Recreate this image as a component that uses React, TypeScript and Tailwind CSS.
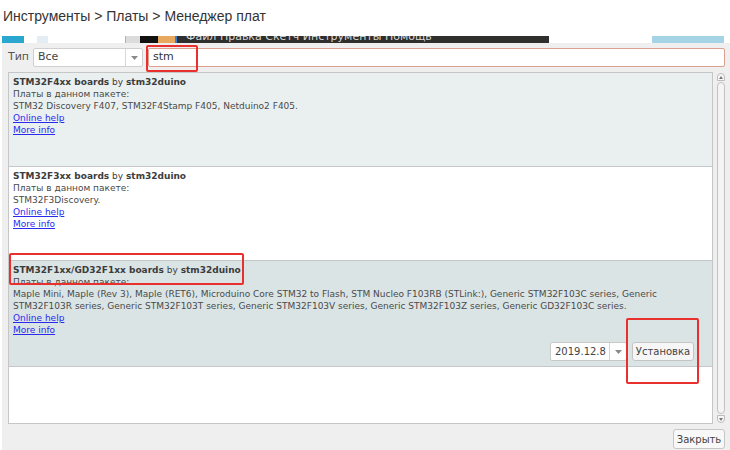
import React from 'react';

type Pkg = {
    name: string;
    boards: string;
    bg: string;
    height: string;
    installable?: boolean;
};

const packages: Pkg[] = [
    {
        name: 'STM32F4xx boards',
        boards: 'STM32 Discovery F407, STM32F4Stamp F405, Netduino2 F405.',
        bg: 'bg-[#eaf0f0]',
        height: 'h-[94px]',
    },
    {
        name: 'STM32F3xx boards',
        boards: 'STM32F3Discovery.',
        bg: 'bg-white',
        height: 'h-[94px]',
    },
    {
        name: 'STM32F1xx/GD32F1xx boards',
        boards:
            'Maple Mini, Maple (Rev 3), Maple (RET6), Microduino Core STM32 to Flash, STM Nucleo F103RB (STLink:), Generic STM32F103C series, Generic STM32F103R series, Generic STM32F103T series, Generic STM32F103V series, Generic STM32F103Z series, Generic GD32F103C series.',
        bg: 'bg-[#dbe4e5]',
        height: 'h-[106px]',
        installable: true,
    },
];

const ArrowDown = () => (
    <svg width="7" height="4" viewBox="0 0 7 4">
        <path d="M0 0 L7 0 L3.5 4 Z" fill="#8a8a8a" />
    </svg>
);

const PackageRow: React.FC<{ pkg: Pkg }> = ({ pkg }) => (
    <div className={`${pkg.height} ${pkg.bg} border-b border-[#c4c8c8] px-[4px] pt-[3px] flex flex-col`}>
        <div className="text-[9px] leading-[12px] text-[#3c3c3c]">
            <b>{pkg.name}</b> by <b>stm32duino</b>
        </div>
        <div className="text-[9px] leading-[12px] text-[#4a4a4a]">Платы в данном пакете:</div>
        <div className="text-[9px] leading-[12px] text-[#4a4a4a] w-[650px]">{pkg.boards}</div>
        <a className="text-[9px] leading-[12px] text-[#2a2aee] underline w-fit">Online help</a>
        <a className="text-[9px] leading-[12px] text-[#2a2aee] underline w-fit">More info</a>
        {pkg.installable && (
            <div className="mt-auto mb-[5px] flex justify-end gap-[5px] pr-[14px]">
                <div className="w-[77px] h-[19px] bg-white border border-[#c9c9c9] rounded-[2px] flex items-center">
                    <span className="flex-1 pl-[4px] text-[10px] text-[#444]">2019.12.8</span>
                    <span className="w-[17px] h-full border-l border-[#d4d4d4] flex items-center justify-center">
                        <ArrowDown />
                    </span>
                </div>
                <button className="w-[62px] h-[19px] bg-[#f6f6f6] border border-[#c4c4c4] rounded-[3px] text-[10px] text-[#444]">
                    Установка
                </button>
            </div>
        )}
    </div>
);

const Strip = () => (
    <div className="h-[7px] flex overflow-hidden">
        <div className="w-[2px]" />
        <div className="w-[22px] bg-[#2aa7cf]" />
        <div className="w-[13px]" />
        <div className="w-[11px] bg-[#e3edf3]" />
        <div className="w-[77px]" />
        <div className="w-[1px] bg-[#e0a0a0]" />
        <div className="w-[14px] bg-[#dcdcdc]" />
        <div className="w-[18px] bg-[#111]" />
        <div className="w-[17px] bg-[#e8a860]" />
        <div className="w-[2px] bg-[#3b7fd0]" />
        <div className="w-[372px] bg-[#2f2f2d] overflow-hidden pl-[9px]">
            <div className="-mt-[6px] text-[11px] leading-[13px] text-[#d8d8d8] whitespace-nowrap">
                Файл Правка Скетч Инструменты Помощь
            </div>
        </div>
        <div className="w-[103px]" />
        <div className="w-[72px] bg-[#a6d4e7]" />
    </div>
);

export default function App() {
    return (
        <div className="w-[730px] h-[450px] bg-white relative overflow-hidden font-['DejaVu_Sans',sans-serif]">
            <div className="h-[36px] pl-[3px] pt-[6px] text-[14px] leading-[20px] text-[#333] font-['Liberation_Sans',Arial,sans-serif]">
                Инструменты &gt; Платы &gt; Менеджер плат
            </div>
            <Strip />

            <div className="h-[407px] ml-[2px] bg-[#efefef] pl-[6px] pr-[3px] pt-[5px] flex flex-col">
                {/* filter row */}
                <div className="h-[19px] flex items-center mr-[2px]">
                    <span className="w-[25px] text-[11px] text-[#555]">Тип</span>
                    <div className="w-[110px] h-[19px] bg-white border border-[#cfcfcf] rounded-[2px] flex items-center">
                        <span className="flex-1 pl-[4px] text-[11px] text-[#444]">Все</span>
                        <span className="w-[17px] h-full border-l border-[#d8d8d8] flex items-center justify-center">
                            <ArrowDown />
                        </span>
                    </div>
                    <div className="ml-[5px] flex-1 h-[19px] bg-white border border-[#dca08e] rounded-[2px] flex items-center pl-[4px] text-[11px] text-[#333]">
                        stm
                    </div>
                </div>

                {/* list + scrollbar */}
                <div className="mt-[5px] h-[352px] flex gap-[2px]">
                    <div className="flex-1 bg-white border border-[#c6c6c6] flex flex-col overflow-hidden">
                        {packages.map((p) => (
                            <PackageRow key={p.name} pkg={p} />
                        ))}
                    </div>
                    <div className="w-[12px] flex flex-col items-center py-[1px]">
                        <div className="w-[8px] h-[8px] border border-[#bdbdbd] rounded-t-[4px] bg-[#f7f7f7] flex items-center justify-center">
                            <svg width="4" height="3" viewBox="0 0 4 3">
                                <path d="M0 3 L4 3 L2 0 Z" fill="#777" />
                            </svg>
                        </div>
                        <div className="w-[8px] flex-1 border border-[#c2c2c2] rounded-[4px] bg-[#f4f4f4] my-[1px]" />
                        <div className="w-[8px] h-[8px] border border-[#bdbdbd] rounded-b-[4px] bg-[#f7f7f7] flex items-center justify-center">
                            <svg width="4" height="3" viewBox="0 0 4 3">
                                <path d="M0 0 L4 0 L2 3 Z" fill="#777" />
                            </svg>
                        </div>
                    </div>
                </div>

                {/* footer */}
                <div className="mt-[5px] flex justify-end mr-[2px]">
                    <button className="w-[52px] h-[20px] bg-[#f8f8f8] border border-[#c6c6c6] rounded-[3px] text-[10px] text-[#444]">
                        Закрыть
                    </button>
                </div>
            </div>

            {/* red annotation frames */}
            <div className="absolute left-[146px] top-[45px] w-[52px] h-[27px] border-2 border-[#e8302e] rounded-[2px]" />
            <div className="absolute left-[9px] top-[253px] w-[235px] h-[32px] border-2 border-[#e8302e] rounded-[2px]" />
            <div className="absolute left-[626px] top-[318px] w-[73px] h-[66px] border-2 border-[#e8302e] rounded-[2px]" />
        </div>
    );
}
